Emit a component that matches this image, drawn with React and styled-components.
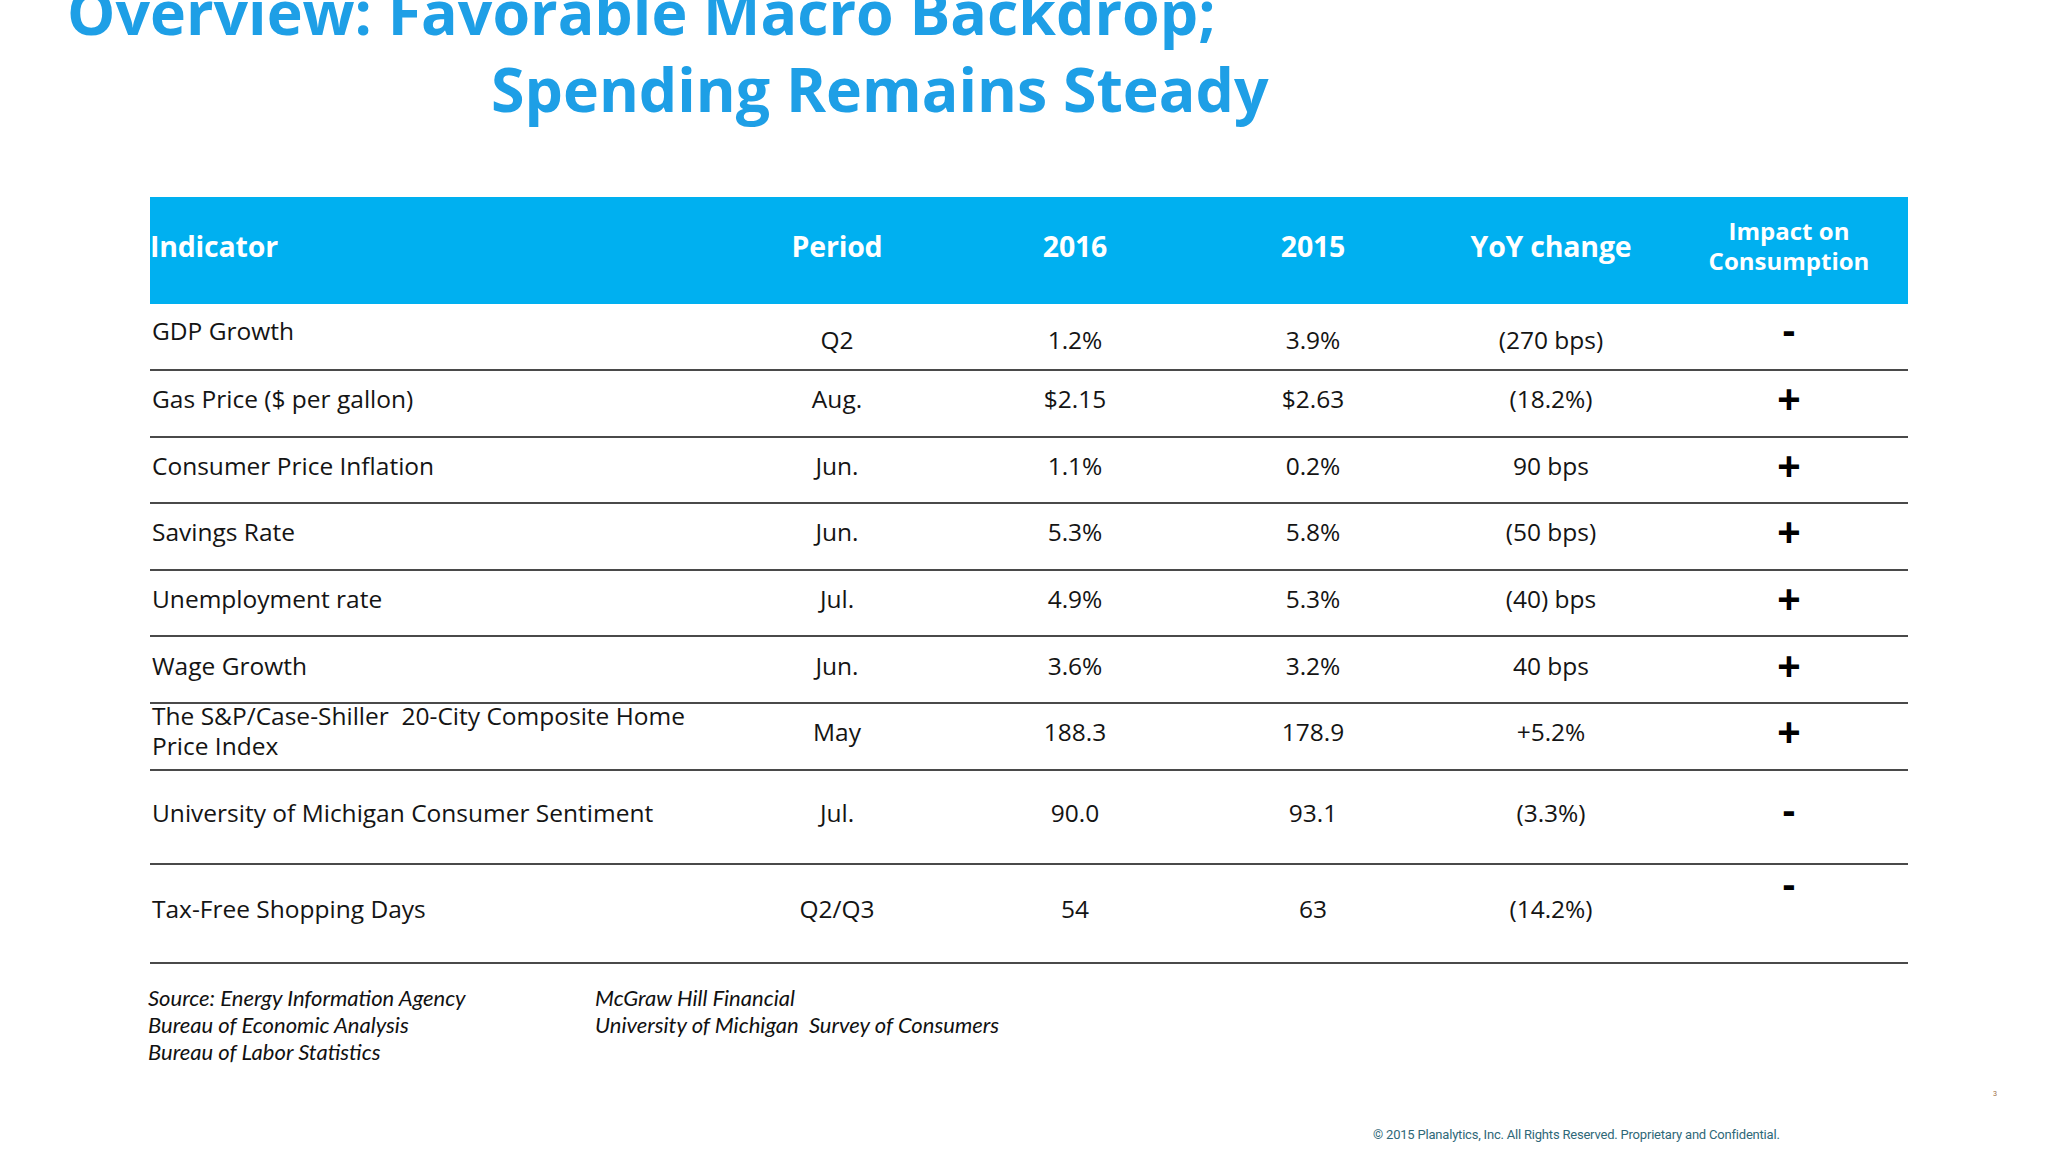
import React from "react";
import styled, { createGlobalStyle } from "styled-components";

const GlobalStyle = createGlobalStyle`
  html, body {
    margin: 0;
    padding: 0;
    background: #ffffff;
  }
  body {
    width: 2048px;
    height: 1152px;
    overflow: hidden;
  }
`;

const COLS = "568px repeat(5, 238px)";

const Slide = styled.main`
  width: 2048px;
  height: 1152px;
  display: flex;
  flex-direction: column;
  overflow: hidden;
  background: #ffffff;
`;

const Title = styled.h1`
  margin: -27px 0 0 0;
  padding-left: 67px;
  font-family: "Open Sans", "Noto Sans", sans-serif;
  font-weight: 700;
  font-size: 60.8px;
  line-height: 77px;
  color: #1e9fe6;
  white-space: nowrap;
`;

const TitleIndent = styled.span`
  display: block;
  padding-left: 424px;
`;

const Table = styled.section`
  margin: 70px 0 0 150px;
  width: 1758px;
  display: flex;
  flex-direction: column;
  font-family: "Open Sans", "Noto Sans", sans-serif;
`;

const HeaderRow = styled.div`
  display: grid;
  grid-template-columns: ${COLS};
  height: 107px;
  background: #00b0f0;
  color: #ffffff;
`;

const HeadCell = styled.div`
  display: flex;
  align-items: center;
  justify-content: ${(p) => (p.$left ? "flex-start" : "center")};
  text-align: ${(p) => (p.$left ? "left" : "center")};
  padding-bottom: 10px;
  font-weight: 700;
  font-size: ${(p) => (p.$small ? "24px" : "28.5px")};
  line-height: ${(p) => (p.$small ? "30px" : "32px")};
  letter-spacing: ${(p) => (p.$small ? "0" : "-0.2px")};
`;

const BodyRow = styled.div`
  display: grid;
  grid-template-columns: ${COLS};
  box-sizing: border-box;
  border-bottom: 2px solid #4a4a4a;
`;

const Cell = styled.div`
  display: flex;
  align-items: ${(p) => (p.$top ? "flex-start" : "center")};
  justify-content: ${(p) => (p.$left ? "flex-start" : "center")};
  text-align: ${(p) => (p.$left ? "left" : "center")};
  padding: ${(p) => p.$pt ?? 0}px 0 ${(p) => p.$pb ?? 8}px ${(p) => (p.$left ? 2 : 0)}px;
  margin-top: ${(p) => p.$mt ?? 0}px;
  font-size: 24.5px;
  line-height: 30px;
  color: #141414;
  white-space: pre-wrap;
`;

const Sign = styled.span`
  font-family: "Liberation Sans", Arial, sans-serif;
  font-weight: 700;
  font-size: 40px;
  line-height: 40px;
  height: 40px;
  color: #000000;
  margin-bottom: ${(p) => (p.$minus ? "5px" : "0")};
`;

const Notes = styled.section`
  margin: 20px 0 0 148px;
  display: flex;
  font-family: Lato, "Liberation Sans", sans-serif;
  font-style: italic;
  font-size: 22px;
  line-height: 27px;
  color: #111111;
`;

const NoteColumn = styled.div`
  width: ${(p) => p.$w || "auto"};
  display: flex;
  flex-direction: column;
`;

const Footer = styled.footer`
  margin-top: auto;
  display: flex;
  flex-direction: column;
  padding: 0 51px 9px 1373px;
`;

const PageNum = styled.span`
  align-self: flex-end;
  font-family: "Liberation Sans", sans-serif;
  font-size: 7px;
  line-height: 10px;
  color: #9a6b45;
`;

const Copyright = styled.span`
  margin-top: 28px;
  font-family: Roboto, "Liberation Sans", sans-serif;
  font-size: 13px;
  line-height: 16px;
  letter-spacing: -0.2px;
  color: #2f6878;
  white-space: nowrap;
`;

const rows = [
  { name: "GDP Growth", period: "Q2", a: "1.2%", b: "3.9%", yoy: "(270 bps)", impact: "-", h: 67, nameTop: 12, valuesLow: true },
  { name: "Gas Price ($ per gallon)", period: "Aug.", a: "$2.15", b: "$2.63", yoy: "(18.2%)", impact: "+", h: 66.6 },
  { name: "Consumer Price Inflation", period: "Jun.", a: "1.1%", b: "0.2%", yoy: "90 bps", impact: "+", h: 66.6 },
  { name: "Savings Rate", period: "Jun.", a: "5.3%", b: "5.8%", yoy: "(50 bps)", impact: "+", h: 66.6 },
  { name: "Unemployment rate", period: "Jul.", a: "4.9%", b: "5.3%", yoy: "(40) bps", impact: "+", h: 66.6 },
  { name: "Wage Growth", period: "Jun.", a: "3.6%", b: "3.2%", yoy: "40 bps", impact: "+", h: 66.6 },
  {
    name: "The S&P/Case-Shiller  20-City Composite Home\nPrice Index",
    period: "May",
    a: "188.3",
    b: "178.9",
    yoy: "+5.2%",
    impact: "+",
    h: 66.6,
    nameTopShift: -3,
  },
  { name: "University of Michigan Consumer Sentiment", period: "Jul.", a: "90.0", b: "93.1", yoy: "(3.3%)", impact: "-", h: 94 },
  { name: "Tax-Free Shopping Days", period: "Q2/Q3", a: "54", b: "63", yoy: "(14.2%)", impact: "-", h: 99.2, impactTop: true },
];

function DataRow({ row }) {
  const nameProps =
    row.nameTop != null
      ? { $top: true, $pt: row.nameTop, $pb: 0 }
      : row.nameTopShift != null
      ? { $top: true, $pt: 0, $pb: 0, $mt: row.nameTopShift }
      : {};
  const valueProps = row.valuesLow ? { $pt: 14, $pb: 8 } : {};
  const impactProps = row.impactTop ? { $top: true, $pt: 0, $pb: 0, $mt: -1 } : {};
  return (
    <BodyRow style={{ height: `${row.h}px` }}>
      <Cell $left {...nameProps}>{row.name}</Cell>
      <Cell {...valueProps}>{row.period}</Cell>
      <Cell {...valueProps}>{row.a}</Cell>
      <Cell {...valueProps}>{row.b}</Cell>
      <Cell {...valueProps}>{row.yoy}</Cell>
      <Cell {...impactProps}>
        <Sign $minus={row.impact === "-"}>{row.impact}</Sign>
      </Cell>
    </BodyRow>
  );
}

export default function App() {
  return (
    <>
      <GlobalStyle />
      <Slide>
        <Title>
          Overview: Favorable Macro Backdrop;
          <TitleIndent>Spending Remains Steady</TitleIndent>
        </Title>

        <Table>
          <HeaderRow>
            <HeadCell $left>Indicator</HeadCell>
            <HeadCell>Period</HeadCell>
            <HeadCell>2016</HeadCell>
            <HeadCell>2015</HeadCell>
            <HeadCell>YoY change</HeadCell>
            <HeadCell $small>
              Impact on
              <br />
              Consumption
            </HeadCell>
          </HeaderRow>
          {rows.map((r) => (
            <DataRow key={r.name} row={r} />
          ))}
        </Table>

        <Notes>
          <NoteColumn $w="447px">
            <span>Source: Energy Information Agency</span>
            <span>Bureau of Economic Analysis</span>
            <span>Bureau of Labor Statistics</span>
          </NoteColumn>
          <NoteColumn>
            <span>McGraw Hill Financial</span>
            <span>University of Michigan&nbsp; Survey of Consumers</span>
          </NoteColumn>
        </Notes>

        <Footer>
          <PageNum>3</PageNum>
          <Copyright>© 2015 Planalytics, Inc. All Rights Reserved. Proprietary and Confidential.</Copyright>
        </Footer>
      </Slide>
    </>
  );
}
